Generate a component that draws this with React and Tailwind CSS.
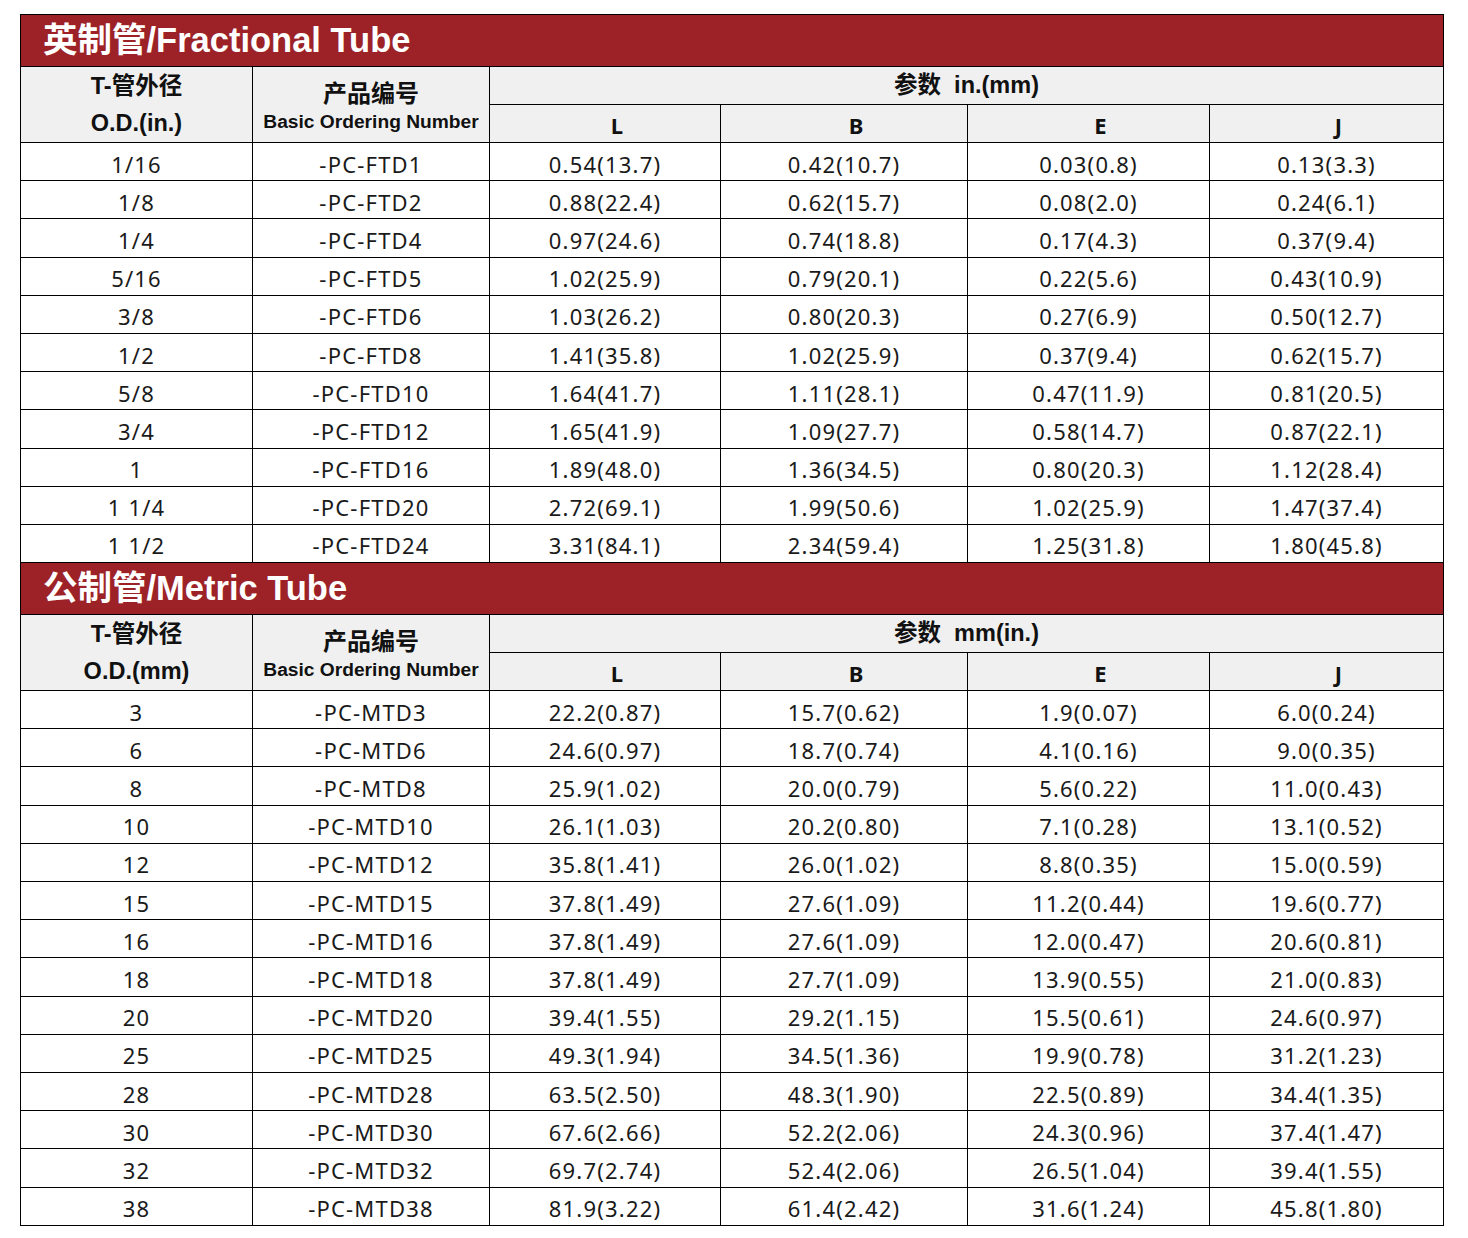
const fractional = [
  ["1/16", "-PC-FTD1", "0.54(13.7)", "0.42(10.7)", "0.03(0.8)", "0.13(3.3)"],
  ["1/8", "-PC-FTD2", "0.88(22.4)", "0.62(15.7)", "0.08(2.0)", "0.24(6.1)"],
  ["1/4", "-PC-FTD4", "0.97(24.6)", "0.74(18.8)", "0.17(4.3)", "0.37(9.4)"],
  ["5/16", "-PC-FTD5", "1.02(25.9)", "0.79(20.1)", "0.22(5.6)", "0.43(10.9)"],
  ["3/8", "-PC-FTD6", "1.03(26.2)", "0.80(20.3)", "0.27(6.9)", "0.50(12.7)"],
  ["1/2", "-PC-FTD8", "1.41(35.8)", "1.02(25.9)", "0.37(9.4)", "0.62(15.7)"],
  ["5/8", "-PC-FTD10", "1.64(41.7)", "1.11(28.1)", "0.47(11.9)", "0.81(20.5)"],
  ["3/4", "-PC-FTD12", "1.65(41.9)", "1.09(27.7)", "0.58(14.7)", "0.87(22.1)"],
  ["1", "-PC-FTD16", "1.89(48.0)", "1.36(34.5)", "0.80(20.3)", "1.12(28.4)"],
  ["1 1/4", "-PC-FTD20", "2.72(69.1)", "1.99(50.6)", "1.02(25.9)", "1.47(37.4)"],
  ["1 1/2", "-PC-FTD24", "3.31(84.1)", "2.34(59.4)", "1.25(31.8)", "1.80(45.8)"],
];

const metric = [
  ["3", "-PC-MTD3", "22.2(0.87)", "15.7(0.62)", "1.9(0.07)", "6.0(0.24)"],
  ["6", "-PC-MTD6", "24.6(0.97)", "18.7(0.74)", "4.1(0.16)", "9.0(0.35)"],
  ["8", "-PC-MTD8", "25.9(1.02)", "20.0(0.79)", "5.6(0.22)", "11.0(0.43)"],
  ["10", "-PC-MTD10", "26.1(1.03)", "20.2(0.80)", "7.1(0.28)", "13.1(0.52)"],
  ["12", "-PC-MTD12", "35.8(1.41)", "26.0(1.02)", "8.8(0.35)", "15.0(0.59)"],
  ["15", "-PC-MTD15", "37.8(1.49)", "27.6(1.09)", "11.2(0.44)", "19.6(0.77)"],
  ["16", "-PC-MTD16", "37.8(1.49)", "27.6(1.09)", "12.0(0.47)", "20.6(0.81)"],
  ["18", "-PC-MTD18", "37.8(1.49)", "27.7(1.09)", "13.9(0.55)", "21.0(0.83)"],
  ["20", "-PC-MTD20", "39.4(1.55)", "29.2(1.15)", "15.5(0.61)", "24.6(0.97)"],
  ["25", "-PC-MTD25", "49.3(1.94)", "34.5(1.36)", "19.9(0.78)", "31.2(1.23)"],
  ["28", "-PC-MTD28", "63.5(2.50)", "48.3(1.90)", "22.5(0.89)", "34.4(1.35)"],
  ["30", "-PC-MTD30", "67.6(2.66)", "52.2(2.06)", "24.3(0.96)", "37.4(1.47)"],
  ["32", "-PC-MTD32", "69.7(2.74)", "52.4(2.06)", "26.5(1.04)", "39.4(1.55)"],
  ["38", "-PC-MTD38", "81.9(3.22)", "61.4(2.42)", "31.6(1.24)", "45.8(1.80)"],
];

const cjk = "font-['Liberation_Sans','Noto_Sans_CJK_SC',sans-serif]";
const num = "font-['Noto_Sans','Noto_Sans_CJK_SC',sans-serif]";

function Section({ title, odUnit, paramUnit, rows }) {
  return (
    <>
      <tr className="h-[52px] bg-[#9c2227]">
        <td colSpan={6} className="border border-black pl-[22px] align-middle">
          <span className={`${cjk} text-[34.5px] font-bold leading-none text-white`}>{title}</span>
        </td>
      </tr>
      <tr className="h-[38px] bg-[#f0f0f0]">
        <td rowSpan={2} className="border border-black text-center align-middle">
          <div className={`${cjk} text-[23.5px] font-bold leading-[37px] text-[#111]`}>T-管外径</div>
          <div className={`${cjk} text-[23.5px] font-bold leading-[37px] text-[#111]`}>O.D.({odUnit})</div>
        </td>
        <td rowSpan={2} className="border border-black text-center align-middle">
          <div className={`${cjk} pt-[4px] text-[24px] font-bold leading-[30px] text-[#111]`}>产品编号</div>
          <div className={`${cjk} text-[19.2px] font-bold leading-[26px] text-[#111]`}>Basic Ordering Number</div>
        </td>
        <td colSpan={4} className={`${cjk} border border-black text-center align-middle text-[23.5px] font-bold text-[#111]`}>
          参数&nbsp;&nbsp;{paramUnit}
        </td>
      </tr>
      <tr className="h-[38px] bg-[#f0f0f0]">
        {["L", "B", "E", "J"].map((h) => (
          <td key={h} className={`${num} border border-black pl-[24px] pt-[4px] text-center align-middle text-[22px] font-bold text-[#111]`}>
            {h}
          </td>
        ))}
      </tr>
      {rows.map((r) => (
        <tr key={r[1]} className="h-[38.2px] bg-white">
          {r.map((c, i) => (
            <td key={i} className={`${num} border border-black pt-[4px] text-center align-middle text-[22px] leading-none tracking-[1.2px] text-[#1a1a1a]`}>
              {c}
            </td>
          ))}
        </tr>
      ))}
    </>
  );
}

export default function App() {
  return (
    <div className="min-h-screen bg-white pl-[20px] pt-[14px]">
      <table className="w-[1423px] table-fixed border-collapse">
        <colgroup>
          <col className="w-[232px]" />
          <col className="w-[237px]" />
          <col className="w-[231px]" />
          <col className="w-[247px]" />
          <col className="w-[242px]" />
          <col className="w-[234px]" />
        </colgroup>
        <tbody>
          <Section title="英制管/Fractional Tube" odUnit="in." paramUnit="in.(mm)" rows={fractional} />
          <Section title="公制管/Metric Tube" odUnit="mm" paramUnit="mm(in.)" rows={metric} />
        </tbody>
      </table>
    </div>
  );
}
